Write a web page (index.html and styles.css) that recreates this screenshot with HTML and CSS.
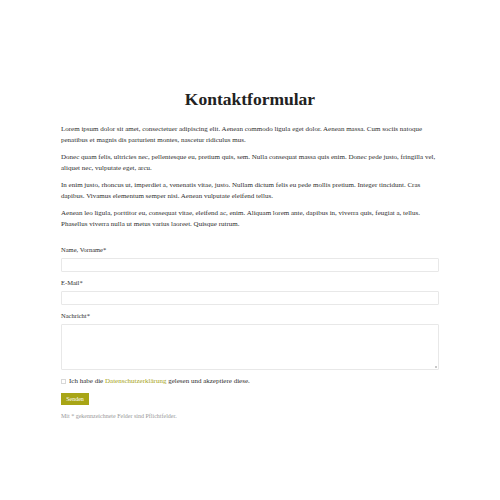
FILE: index.html
```html
<!DOCTYPE html>
<html lang="de">
<head>
<meta charset="utf-8">
<title>Kontaktformular</title>
<link rel="stylesheet" href="styles.css">
</head>
<body>
<main class="page">
  <h1 class="title">Kontaktformular</h1>
  <p class="text">Lorem ipsum dolor sit amet, consectetuer adipiscing elit. Aenean commodo ligula eget dolor. Aenean massa. Cum sociis natoque penatibus et magnis dis parturient montes, nascetur ridiculus mus.</p>
  <p class="text">Donec quam felis, ultricies nec, pellentesque eu, pretium quis, sem. Nulla consequat massa quis enim. Donec pede justo, fringilla vel, aliquet nec, vulputate eget, arcu.</p>
  <p class="text">In enim justo, rhoncus ut, imperdiet a, venenatis vitae, justo. Nullam dictum felis eu pede mollis pretium. Integer tincidunt. Cras dapibus. Vivamus elementum semper nisi. Aenean vulputate eleifend tellus.</p>
  <p class="text">Aenean leo ligula, porttitor eu, consequat vitae, eleifend ac, enim. Aliquam lorem ante, dapibus in, viverra quis, feugiat a, tellus. Phasellus viverra nulla ut metus varius laoreet. Quisque rutrum.</p>

  <form class="form">
    <label class="field">
      <span class="label">Name, Vorname*</span>
      <input class="input" type="text">
    </label>
    <label class="field">
      <span class="label">E-Mail*</span>
      <input class="input" type="email">
    </label>
    <label class="field">
      <span class="label">Nachricht*</span>
      <span class="area-wrap"><textarea class="input area"></textarea></span>
    </label>
    <label class="consent">
      <span class="box"></span>
      <span>Ich habe die <a class="link" href="#">Datenschutzerklärung</a> gelesen und akzeptiere diese.</span>
    </label>
    <button class="submit" type="button">Senden</button>
    <p class="note">Mit * gekennzeichnete Felder sind Pflichtfelder.</p>
  </form>
</main>
</body>
</html>
```

FILE: styles.css
```css
html, body {
  margin: 0;
  padding: 0;
  background: #ffffff;
}
body {
  font-family: "Liberation Serif", "Times New Roman", serif;
  color: #2e2e2e;
}
.page {
  width: 378px;
  margin: 0 auto;
  padding-top: 88px;
}
.title {
  margin: 0 0 14px;
  text-align: center;
  font-size: 17.5px;
  line-height: 22px;
  font-weight: bold;
  color: #222222;
}
.text {
  margin: 0 0 6px;
  font-size: 7px;
  line-height: 11px;
}
.form {
  margin-top: 15px;
  display: flex;
  flex-direction: column;
}
.field {
  display: flex;
  flex-direction: column;
  margin-bottom: 6px;
}
.label {
  font-size: 6.5px;
  line-height: 10px;
  margin-bottom: 3px;
}
.input {
  box-sizing: border-box;
  width: 100%;
  height: 14px;
  margin: 0;
  border: 1px solid #e8e8e8;
  border-radius: 1px;
  background: #fff;
  padding: 0;
  font: inherit;
  display: block;
}
.area-wrap {
  position: relative;
  display: block;
}
.area-wrap::after {
  content: "";
  position: absolute;
  right: 2px;
  bottom: 2px;
  width: 2px;
  height: 2px;
  background: #c8c8c8;
}
.area {
  height: 46px;
  resize: none;
}
.consent {
  display: flex;
  align-items: center;
  gap: 3px;
  font-size: 7px;
  line-height: 10px;
  margin-top: 0;
}
.box {
  width: 3px;
  height: 3px;
  border: 1px solid #d8d8d8;
  background: #fff;
}
.link {
  color: #a6a317;
  text-decoration: none;
}
.submit {
  align-self: flex-start;
  margin-top: 7px;
  width: 28px;
  height: 12px;
  padding: 0;
  border: none;
  border-radius: 0;
  background: #a8a516;
  color: #ffffff;
  font-family: "Liberation Serif", serif;
  font-size: 6px;
  line-height: 12px;
}
.note {
  margin: 7px 0 0;
  font-size: 6px;
  line-height: 8px;
  color: #999999;
}
```
